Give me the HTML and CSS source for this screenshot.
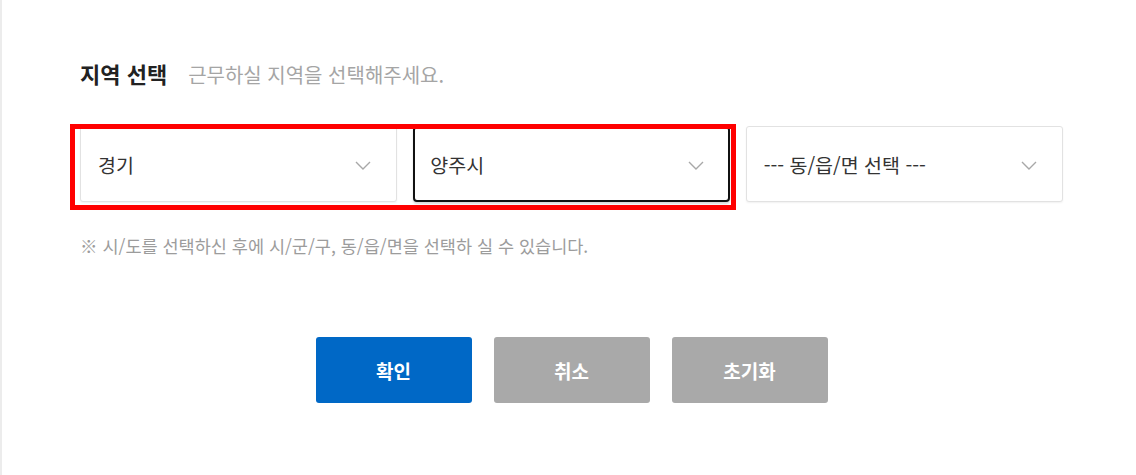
FILE: index.html
```html
<!DOCTYPE html>
<html lang="ko">
<head>
    <meta charset="UTF-8">
    <title>지역 선택</title>
    <meta name="viewport" content="width=device-width, initial-scale=1.0">
    <link rel="stylesheet" href="styles.css">
</head>
<body>
    <div class="panel">
        <div class="head">
            <h2 class="head-title">지역 선택</h2>
            <p class="head-desc">근무하실 지역을 선택해주세요.</p>
        </div>

        <div class="selects">
            <div class="select">
                <span class="select-value">경기</span>
                <svg class="chevron" width="16" height="9" viewBox="0 0 16 9"><path d="M1 1 L8 8 L15 1" fill="none" stroke="#a8a8a8" stroke-width="1.4"/></svg>
            </div>
            <div class="select is-focus">
                <span class="select-value">양주시</span>
                <svg class="chevron" width="16" height="9" viewBox="0 0 16 9"><path d="M1 1 L8 8 L15 1" fill="none" stroke="#a8a8a8" stroke-width="1.4"/></svg>
            </div>
            <div class="select">
                <span class="select-value">--- 동/읍/면 선택 ---</span>
                <svg class="chevron" width="16" height="9" viewBox="0 0 16 9"><path d="M1 1 L8 8 L15 1" fill="none" stroke="#a8a8a8" stroke-width="1.4"/></svg>
            </div>
            <!-- 강조 표시 (시/도, 시/군/구) -->
            <div class="highlight"></div>
        </div>

        <p class="notice">※ 시/도를 선택하신 후에 시/군/구, 동/읍/면을 선택하 실 수 있습니다.</p>

        <div class="actions">
            <button class="btn btn-primary">확인</button>
            <button class="btn btn-gray">취소</button>
            <button class="btn btn-gray">초기화</button>
        </div>
    </div>
</body>
</html>
```

FILE: styles.css
```css
* {
    box-sizing: border-box;
    margin: 0;
    padding: 0;
}

body {
    margin: 0;
    background: #fff;
    font-family: "Noto Sans CJK KR", "Noto Sans", sans-serif;
    color: #333;
}

.panel {
    min-height: 475px;
    border-left: 2px solid #ececec;
    padding: 61px 73px 0 78px;
}

.head {
    display: flex;
    align-items: baseline;
    gap: 21px;
}

.head-title {
    font-size: 22px;
    font-weight: bold;
    line-height: 24px;
    color: #222;
}

.head-desc {
    font-size: 20px;
    line-height: 24px;
    color: #a5a5a5;
}

.selects {
    position: relative;
    display: flex;
    gap: 16px;
    margin-top: 39px;
}

.select {
    flex: 1;
    height: 76px;
    display: flex;
    align-items: center;
    justify-content: space-between;
    padding: 0 25px 0 17px;
    border: 1px solid #e2e2e2;
    border-radius: 3px;
    box-shadow: 0 1px 2px rgba(0, 0, 0, 0.06);
    background: #fff;
}

.select.is-focus {
    border: 2px solid #111;
    border-radius: 4px;
    padding-left: 15px;
    padding-right: 24px;
    box-shadow: 0 2px 2px rgba(0, 0, 0, 0.15);
}

.select-value {
    font-size: 19.5px;
    color: #333;
}

.chevron {
    display: block;
    margin-top: 2px;
}

.highlight {
    position: absolute;
    left: -10px;
    top: -2px;
    width: 666px;
    height: 86px;
    border: 5px solid #ff0000;
    pointer-events: none;
}

.notice {
    margin-top: 34px;
    font-size: 17.5px;
    line-height: 20px;
    color: #9c9c9c;
}

.actions {
    display: flex;
    justify-content: center;
    gap: 22px;
    margin-top: 81px;
}

.btn {
    width: 156px;
    height: 66px;
    border: none;
    border-radius: 3px;
    font-family: inherit;
    font-size: 19px;
    font-weight: bold;
    color: #fff;
}

.btn-primary {
    background: #0068c6;
}

.btn-gray {
    background: #a9a9a9;
}
```
